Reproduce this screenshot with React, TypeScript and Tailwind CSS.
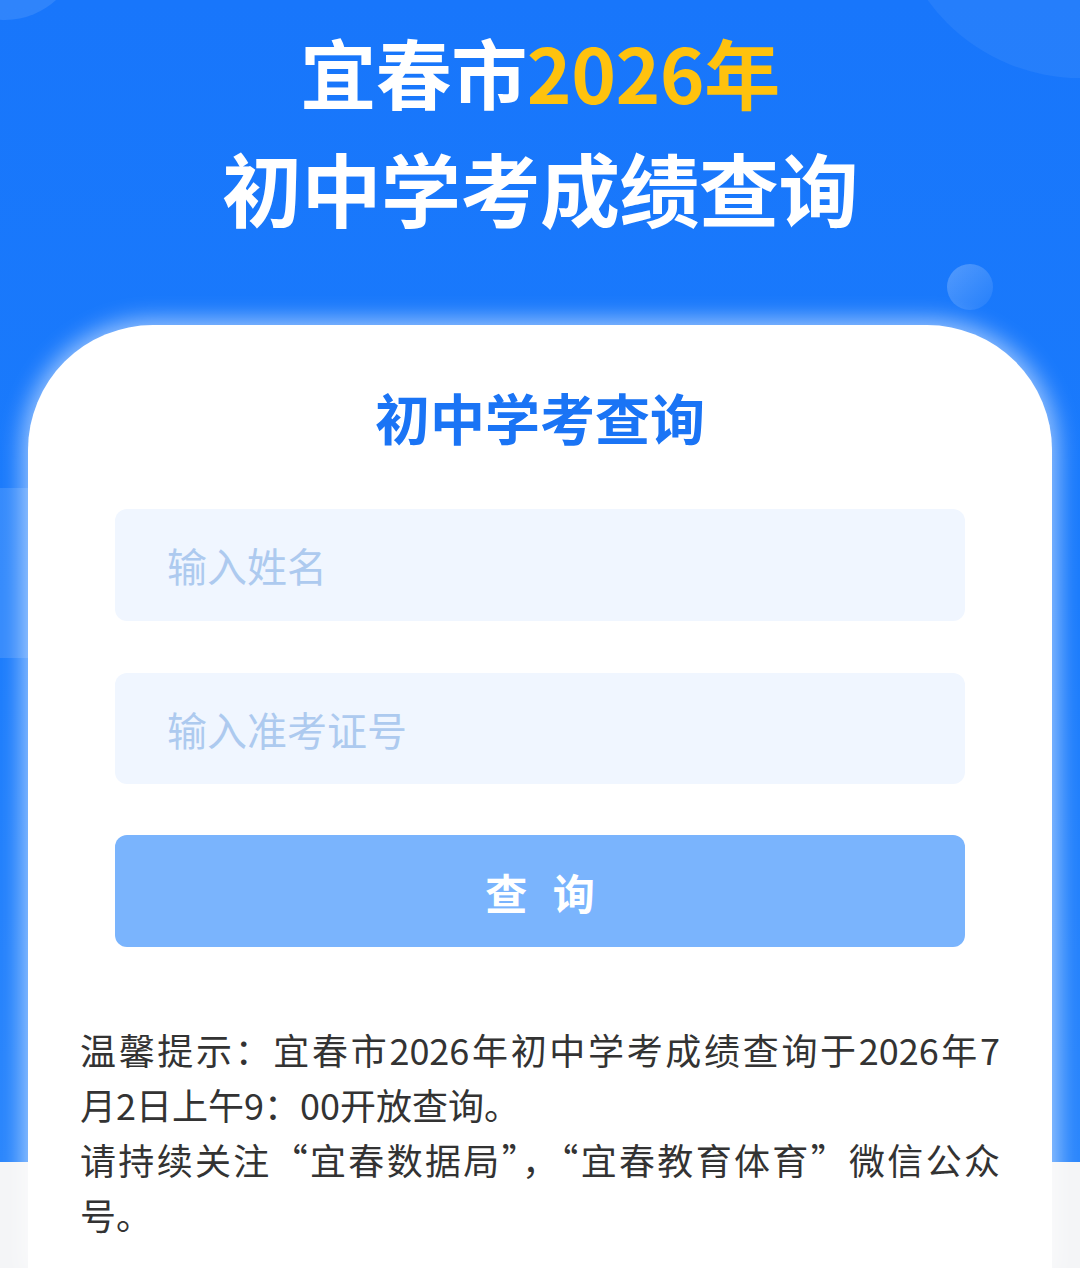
import React from "react";

export default function App() {
  const font = { fontFamily: '"Noto Sans CJK SC", "Noto Sans", sans-serif' };
  return (
    <div
      className="relative min-h-[1268px] w-[1080px] overflow-hidden bg-[linear-gradient(180deg,#1876fb_0px,#1a7bfc_600px,#2a86fc_1162px,#f4f5f7_1162px,#f4f5f7_1268px)]"
      style={font}
    >
      {/* decorative shapes */}
      <div className="absolute left-[-70px] top-[-130px] h-[150px] w-[150px] rounded-full bg-white/10" />
      <div className="absolute left-[892px] top-[-298px] h-[376px] w-[376px] rounded-full bg-white/[0.06]" />
      <div className="absolute left-[947px] top-[264px] h-[46px] w-[46px] rounded-full bg-[linear-gradient(135deg,rgba(255,255,255,0.25),rgba(255,255,255,0.05))]" />
      <div className="absolute left-0 top-[488px] h-[170px] w-[60px] bg-white/[0.12]" />

      <div className="relative flex flex-col items-center">
        {/* header title */}
        <div className="flex flex-col items-center pt-[14px] font-bold text-white">
          <div className="text-[76px] leading-[115px] tracking-[-0.5px]">
            宜春市<span className="text-[#ffc20e]">2026年</span>
          </div>
          <div className="text-[80px] leading-[115px] tracking-[-0.5px]">初中学考成绩查询</div>
        </div>

        {/* card */}
        <div className="mt-[81px] flex min-h-[943px] w-[1024px] flex-col rounded-t-[125px] bg-white pt-[58px] shadow-[0_0_22px_6px_rgba(255,255,255,0.55)]">
          <div className="text-center text-[55px] font-bold leading-[66px] text-[#1a74f5]">初中学考查询</div>

          <div className="mt-[60px] flex flex-col px-[87px]">
            <input
              className="h-[112px] w-full rounded-[12px] bg-[#f0f6ff] pl-[52px] text-[40px] text-[#333] outline-none placeholder:text-[#adcaef]"
              placeholder="输入姓名"
              style={font}
            />
            <input
              className="mt-[52px] h-[111px] w-full rounded-[12px] bg-[#f0f6ff] pl-[52px] text-[40px] text-[#333] outline-none placeholder:text-[#adcaef]"
              placeholder="输入准考证号"
              style={font}
            />
            <button
              className="mt-[51px] flex h-[112px] w-full items-center justify-center rounded-[12px] bg-[#7ab4fd] text-[42px] font-bold text-white"
              style={font}
            >
              <span className="pl-[8px] tracking-[8px]">查 询</span>
            </button>
          </div>

          <div className="mt-[75px] px-[52px] text-[36px] leading-[55px] text-[#333]">
            <div className="whitespace-nowrap text-justify [text-align-last:justify]">温馨提示：宜春市2026年初中学考成绩查询于2026年7</div>
            <div className="whitespace-nowrap">月2日上午9：00开放查询。</div>
            <div className="whitespace-nowrap text-justify [text-align-last:justify]">请持续关注“宜春数据局”，“宜春教育体育”微信公众</div>
            <div className="whitespace-nowrap">号。</div>
          </div>
        </div>
      </div>
    </div>
  );
}
